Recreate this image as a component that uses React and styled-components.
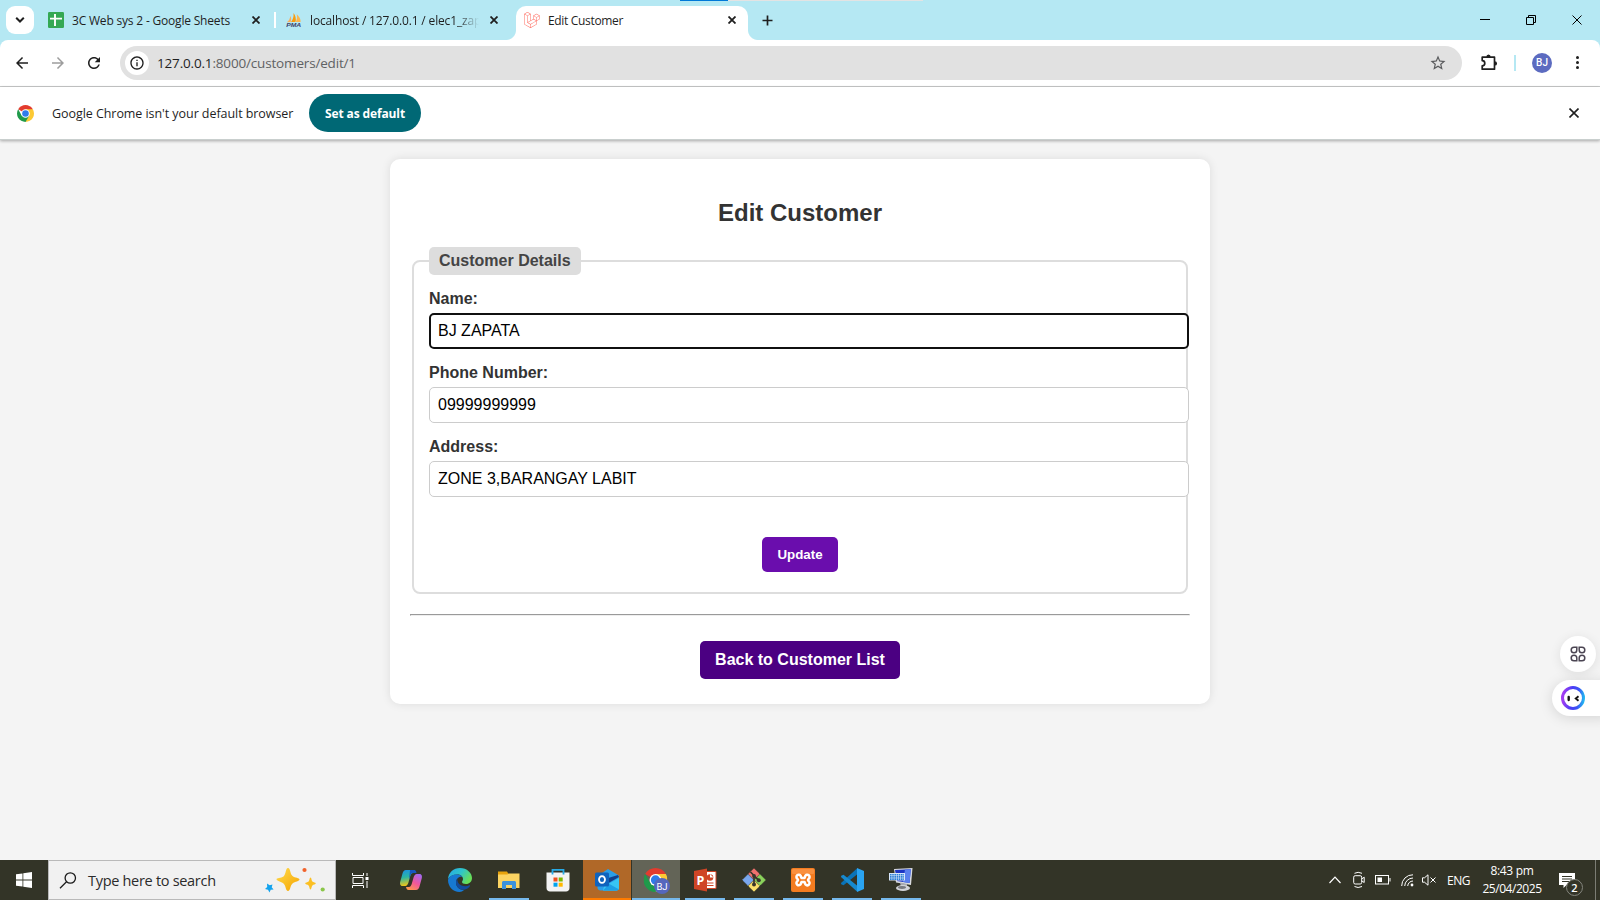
import React from "react";
import styled, { createGlobalStyle } from "styled-components";
import { SiLaravel } from "react-icons/si";

const GlobalStyle = createGlobalStyle`
  *, *::before, *::after { box-sizing: border-box; }
  html, body { margin: 0; padding: 0; }
  body { overflow: hidden; font-family: "Open Sans", "Noto Sans", sans-serif; color: #1f1f1f; }
`;

const Screen = styled.div`
  position: relative;
  display: flex;
  flex-direction: column;
  width: 1600px;
  height: 900px;
  overflow: hidden;
  background: #b5e8f3;
`;

/* Text set with a fine letter-spacing */
const Label = styled.span`
  font-size: ${(p) => p.$size || 12}px;
  letter-spacing: ${(p) => p.$track || 0}px;
  font-weight: ${(p) => p.$weight || 400};
  color: ${(p) => p.$color || "#1f1f1f"};
  white-space: nowrap;
`;

/* ---------- Tab strip ---------- */
const TabStrip = styled.header`
  display: flex;
  height: 40px;
  flex: none;
  padding-left: 6px;
`;

const TabSearch = styled.button`
  display: grid;
  place-items: center;
  width: 28px;
  height: 28px;
  margin: 6px 6px 0 0;
  padding: 0;
  border: 0;
  border-radius: 9px;
  background: #fff;
`;

const Tab = styled.div`
  position: relative;
  display: flex;
  align-items: center;
  width: ${(p) => p.$width}px;
  height: 34px;
  margin-top: 6px;
  margin-right: ${(p) => p.$after || 0}px;
  padding: 0 ${(p) => p.$right || 12}px 6px ${(p) => p.$left || 8}px;
  border-radius: 10px 10px 0 0;
  background: ${(p) => (p.$active ? "#fff" : "transparent")};
  gap: 8px;
`;

const Flare = styled.span`
  position: absolute;
  bottom: 0;
  ${(p) => p.$side}: -10px;
  width: 10px;
  height: 10px;
  background: radial-gradient(circle at ${(p) => (p.$side === "left" ? "0 0" : "100% 0")}, transparent 9.5px, #fff 10.5px);
`;

const TabTitle = styled.div`
  flex: 1;
  min-width: 0;
  overflow: hidden;
  line-height: 18px;
  padding-top: 1px;
  display: flex;
  ${(p) => p.$fade && "mask-image: linear-gradient(90deg, #000 calc(100% - 25px), transparent calc(100% - 3px));"}
`;

const TabDivider = styled.span`
  width: 2px;
  height: 16px;
  margin-top: 12px;
  background: #fff;
`;

const NewTab = styled.button`
  display: grid;
  place-items: center;
  width: 28px;
  height: 28px;
  margin: 6px 0 0 5px;
  padding: 0;
  border: 0;
  background: none;
`;

const WindowControls = styled.div`
  display: flex;
  margin-left: auto;
`;

const WindowButton = styled.button`
  display: grid;
  place-items: center;
  width: 46px;
  height: 40px;
  padding: 0;
  border: 0;
  background: none;
`;

const DropIndicator = styled.div`
  position: absolute;
  top: 0;
  left: 680px;
  width: 243px;
  height: 1px;
  background: linear-gradient(90deg, #0078d7 48px, #e3e3e3 48px);
`;

/* ---------- Toolbar ---------- */
const Toolbar = styled.div`
  display: flex;
  align-items: center;
  flex: none;
  height: 47px;
  padding: 0 12px 1px 13px;
  border-bottom: 1px solid #c9cbcb;
  border-radius: 8px 8px 0 0;
  background: #fff;
`;

const NavButtons = styled.div`
  display: flex;
  gap: 18px;
  margin-right: 17px;
  svg { display: block; }
`;

const AddressBar = styled.div`
  display: flex;
  align-items: center;
  width: 1342px;
  height: 34px;
  padding: 0 15px 0 5px;
  border-radius: 17px;
  background: #e1e1e1;
`;

const SiteInfo = styled.span`
  display: grid;
  place-items: center;
  width: 24px;
  height: 24px;
  margin-right: 8px;
  border-radius: 50%;
  background: #fff;
`;

const Url = styled.div`
  flex: 1;
  display: flex;
  line-height: 20px;
`;

const ToolbarEnd = styled.div`
  display: flex;
  align-items: center;
  flex: 1;
  margin-left: 18px;
  svg { display: block; }
`;

const ToolbarDivider = styled.span`
  width: 2px;
  height: 16px;
  margin: 0 16px 0 16px;
  background: #b5e8f3;
`;

const Avatar = styled.span`
  display: grid;
  place-items: center;
  width: 20px;
  height: 20px;
  border-radius: 50%;
  background: #5c6bc0;
  color: #fff;
  font: 500 10px Roboto, sans-serif;
`;

const Kebab = styled.span`
  display: flex;
  flex-direction: column;
  gap: 2.4px;
  margin-left: 24px;
  i { width: 3px; height: 3px; border-radius: 50%; background: #1f1f1f; }
`;

/* ---------- Default browser bar ---------- */
const InfoBar = styled.div`
  position: relative;
  z-index: 1;
  display: flex;
  align-items: center;
  flex: none;
  height: 53px;
  padding: 0 19px 0 17px;
  border-bottom: 1px solid #c9cfce;
  background: #fff;
  box-shadow: 0 1px 3px rgba(0, 0, 0, 0.32);
`;

const InfoText = styled.span`
  display: flex;
  width: 241px;
  margin: 0 16px 0 18px;
`;

const PillButton = styled.button`
  display: grid;
  place-items: center;
  width: 112px;
  height: 38px;
  padding: 0;
  border: 0;
  border-radius: 19px;
  background: #006875;
  font-family: inherit;
`;

const CloseBar = styled.span`
  display: flex;
  margin-left: auto;
  margin-right: 2px;
`;

/* ---------- Page ---------- */
const Viewport = styled.main`
  flex: 1;
  min-height: 0;
  padding-top: 19px;
  background: #f4f4f4;
  font-family: "Liberation Sans", Arial, sans-serif;
`;

const Card = styled.section`
  width: 820px;
  height: 545px;
  margin: 0 auto;
  padding: 20px;
  border-radius: 10px;
  background: #fff;
  box-shadow: 0 0 10px rgba(0, 0, 0, 0.1);
  text-align: center;
`;

const Title = styled.h2`
  margin: 20px 0 21px;
  color: #333;
  font-size: 24px;
  line-height: 27px;
`;

const Fieldset = styled.fieldset`
  min-width: 0;
  margin: 0 2px;
  padding: 15px 15px 20px;
  border: 2px solid #ddd;
  border-radius: 8px;
  text-align: left;
`;

const Legend = styled.legend`
  padding: 5px 10px;
  border-radius: 5px;
  background: #ddd;
  color: #444;
  font-size: 16px;
  font-weight: bold;
  line-height: 18px;
`;

const Field = styled.label`
  display: block;
  margin-bottom: 15px;
  color: #333;
  font-size: 16px;
  font-weight: bold;
  line-height: 18px;
`;

const TextInput = styled.input`
  display: block;
  width: 760px;
  height: 36px;
  margin-top: 5px;
  padding: ${(p) => (p.$focused ? 7 : 8)}px;
  border: ${(p) => (p.$focused ? "2px solid #101010" : "1px solid #ccc")};
  border-radius: 5px;
  outline: 0;
  background: #fff;
  color: #000;
  font: 16px "Liberation Sans", Arial, sans-serif;
`;

const UpdateButton = styled.button`
  display: block;
  height: 35px;
  margin: 40px auto 0;
  padding: 0 15px;
  border: 0;
  border-radius: 5px;
  background: #6a0dad;
  color: #fff;
  font: bold 13.333px "Liberation Sans", Arial, sans-serif;
`;

const Rule = styled.hr`
  margin: 20px 0 25px;
`;

const BackLink = styled.a`
  display: inline-block;
  padding: 10px 15px;
  border-radius: 5px;
  background: #4b0082;
  color: #fff;
  font-size: 16px;
  font-weight: bold;
  line-height: 18px;
`;

/* ---------- Floating helpers ---------- */
const FloatCircle = styled.div`
  position: absolute;
  top: 636px;
  left: 1560px;
  display: grid;
  place-items: center;
  width: 36px;
  height: 36px;
  border-radius: 50%;
  background: #fff;
  box-shadow: 0 2px 12px rgba(0, 0, 0, 0.09);
`;

const FloatPill = styled.div`
  position: absolute;
  top: 680px;
  left: 1552px;
  display: flex;
  align-items: center;
  width: 66px;
  height: 36px;
  padding-left: 9px;
  border-radius: 18px;
  background: #fff;
  box-shadow: 0 2px 14px rgba(0, 0, 0, 0.13);
`;

/* ---------- Taskbar ---------- */
const Taskbar = styled.footer`
  display: flex;
  flex: none;
  height: 40px;
  background: #333427;
  svg { display: block; }
`;

const StartButton = styled.div`
  display: grid;
  place-items: center;
  width: 48px;
`;

const SearchBox = styled.div`
  display: flex;
  align-items: center;
  width: 288px;
  padding: 0 9px 0 10px;
  border: 1px solid #b9b9b9;
  background: #f1f1f1;
`;

const SearchText = styled.span`
  flex: 1;
  display: flex;
  margin-left: 11px;
`;

const TaskView = styled.div`
  display: grid;
  place-items: center;
  width: 48px;
  margin-right: 3px;
`;

const AppButton = styled.div`
  display: flex;
  flex-direction: column;
  align-items: center;
  justify-content: space-between;
  width: 48px;
  height: 40px;
  margin-right: 1px;
  padding-top: 8px;
  background: ${(p) => p.$fill || "transparent"};
`;

const RunningLine = styled.span`
  width: ${(p) => (p.$wide ? 48 : 40)}px;
  height: 2px;
  background: ${(p) => p.$color || "#76b9ed"};
`;

const Tray = styled.div`
  display: flex;
  align-items: center;
  margin-left: auto;
  color: #fff;
`;

const TrayIcon = styled.span`
  display: grid;
  place-items: center;
  width: ${(p) => p.$width || 24}px;
`;

const Language = styled.span`
  display: flex;
  width: 30px;
  margin-left: 8px;
`;

const Clock = styled.div`
  display: flex;
  flex-direction: column;
  align-items: center;
  width: 70px;
  line-height: 18px;
  padding-bottom: 1px;
`;

const Notifications = styled.div`
  position: relative;
  display: grid;
  place-items: center;
  width: 48px;
  height: 40px;
  padding-right: 8px;
`;

const NotificationCount = styled.span`
  position: absolute;
  top: 19px;
  left: 19px;
  display: grid;
  place-items: center;
  width: 17px;
  height: 17px;
  border: 1px solid #85867e;
  border-radius: 50%;
  background: #333427;
  color: #fff;
  font-size: 11px;
  font-weight: 600;
  line-height: 1;
`;

const ShowDesktop = styled.span`
  width: 5px;
  height: 40px;
  border-left: 1px solid #7c7d74;
`;

/* ---------- Drawings ---------- */
const Cross = ({ size = 8, width = 1.8, color = "#1f1f1f" }) => (
  <svg width={size} height={size} viewBox={`0 0 ${size} ${size}`} stroke={color} strokeWidth={width}>
    <path d={`M.5 .5 L${size - 0.5} ${size - 0.5} M${size - 0.5} .5 L.5 ${size - 0.5}`} />
  </svg>
);

const Glyph = ({ d, size = 18, color = "#1f1f1f" }) => (
  <svg width={size} height={size} viewBox="0 0 24 24" fill={color}>
    <path d={d} />
  </svg>
);

const BACK = "M20 11H7.83l5.59-5.59L12 4l-8 8 8 8 1.41-1.41L7.83 13H20v-2z";
const FORWARD = "M12 4l-1.41 1.41L16.17 11H4v2h12.17l-5.58 5.59L12 20l8-8z";
const RELOAD =
  "M17.65 6.35C16.2 4.9 14.21 4 12 4c-4.42 0-7.99 3.58-7.99 8s3.57 8 7.99 8c3.73 0 6.84-2.55 7.73-6h-2.08c-.82 2.33-3.04 4-5.65 4-3.31 0-6-2.69-6-6s2.69-6 6-6c1.66 0 3.14.69 4.22 1.78L13 11h7V4l-2.35 2.35z";
const STAR =
  "M22 9.24l-7.19-.62L12 2 9.19 8.63 2 9.24l5.46 4.73L5.82 21 12 17.27 18.18 21l-1.63-7.03L22 9.24zM12 15.4l-3.76 2.27 1-4.28-3.32-2.88 4.38-.38L12 6.1l1.71 4.04 4.38.38-3.32 2.88 1 4.28L12 15.4z";
const INFO =
  "M11 7h2v2h-2zm0 4h2v6h-2zm1-9C6.48 2 2 6.48 2 12s4.48 10 10 10 10-4.48 10-10S17.52 2 12 2zm0 18c-4.41 0-8-3.59-8-8s3.59-8 8-8 8 3.59 8 8-3.59 8-8 8z";

const SheetsIcon = () => (
  <svg width="16" height="16" viewBox="0 0 16 16">
    <rect width="16" height="16" rx="1.2" fill="#34a853" />
    <path d="M2 6.6h12M7 2v12" stroke="#fff" strokeWidth="1.9" />
  </svg>
);

const PmaIcon = () => (
  <svg width="16" height="16" viewBox="0 0 17 16">
    <path d="M1 10.5Q4 8 5 3.5 6 7 5 10z" fill="#fbb05a" />
    <path d="M5.4 10Q8.5 6 8 .5 11.500 5 10 10z" fill="#f89c0e" />
    <path d="M10.600 10Q12.500 6 11.500 2 15.800 6 15.500 10z" fill="#fbb64f" />
    <text x=".2" y="15" fill="#3b3f6b" fontFamily="Liberation Sans, sans-serif" fontSize="6.200" fontWeight="700" fontStyle="italic" textLength="16" lengthAdjust="spacingAndGlyphs">PMA</text>
  </svg>
);

const PuzzleIcon = () => (
  <svg width="18" height="18" viewBox="0 0 18 18" fill="none" stroke="#1f1f1f" strokeWidth="1.700" strokeLinejoin="round">
    <path d="M2.200 3.200H14.500V15.200H2.200V11.800A2.600 2.600 0 0 0 2.200 6.600Z" />
    <path d="M6.300 3.200a2.200 2.600 0 0 1 4.400 0zM14.500 7.200a2.600 2.200 0 0 1 0 4.400z" fill="#1f1f1f" stroke="none" />
  </svg>
);

const ChromeIcon = ({ size }) => (
  <svg width={size} height={size} viewBox="0 0 48 48">
    <path d="M24 24 L3.220 12 A24 24 0 0 1 44.780 12 Z" fill="#e33b2e" />
    <path d="M24 24 V12 H44.780 A24 24 0 0 1 24 48 Z" fill="#fcc934" />
    <path d="M3.220 12 L13.600 30 L24 24 L34.400 30 L24 48 A24 24 0 0 1 3.220 12 Z" fill="#1f9a4a" />
    <circle cx="24" cy="24" r="12" fill="#fff" />
    <circle cx="24" cy="24" r="9.300" fill="#2f7bea" />
  </svg>
);

const SparkleArt = () => (
  <svg width="62" height="26" viewBox="0 0 62 26">
    <defs>
      <linearGradient id="gold" x1="0" y1="0" x2="1" y2="1">
        <stop offset="0" stopColor="#ffdc4d" />
        <stop offset="1" stopColor="#f5a300" />
      </linearGradient>
    </defs>
    <path d="M24 1C26.500 1 26 7 28.500 9S35.500 10.800 35.500 12.500 31 14.500 28.500 16.500 26.500 24 24 24 22 18.500 19.500 16.500 12.500 14 12.500 12.300 17 11.500 19.500 9.500 21.500 1 24 1Z" fill="url(#gold)" />
    <path d="M46.500 10.500c1 0 1 3.200 1.900 4.100s3.400 1 3.400 1.900-2.500 1-3.400 1.900-.9 4-1.900 4-1-3.100-1.900-4-3.400-1-3.400-1.900 2.500-1 3.400-1.900.9-4.100 1.900-4.100z" fill="#fbbf22" />
    <path d="M3 16.500l2.700 1.800 2.800-.9-.8 2.800 1.900 2.200-2.900.3L5.500 25.500l-1.500-2.800-3-.7 2.200-2z" fill="#13a3ee" />
    <circle cx="40.500" cy="3" r="2.100" fill="#f1622b" />
    <circle cx="58.700" cy="22.500" r="2.100" fill="#8ac649" />
  </svg>
);

const TaskViewIcon = () => (
  <svg width="17" height="17" viewBox="0 0 17 17" fill="none" stroke="#fff" strokeWidth="1">
    <path d="M.5 1v2.500h11V1M.5 16v-2.500h11V16M1 5.500h10v6H1zM15 1v3M15 9v7" />
    <rect x="13.500" y="5" width="3" height="3" fill="#fff" stroke="none" />
  </svg>
);

const CopilotIcon = () => (
  <svg width="24" height="24" viewBox="0 0 24 24">
    <defs>
      <linearGradient id="cpA" x1="0" y1="0" x2=".2" y2="1">
        <stop offset="0" stopColor="#1a8fe8" />
        <stop offset=".5" stopColor="#2cb7a1" />
        <stop offset="1" stopColor="#f0c419" />
      </linearGradient>
      <linearGradient id="cpB" x1=".8" y1="0" x2=".2" y2="1">
        <stop offset="0" stopColor="#a56af0" />
        <stop offset=".5" stopColor="#f0569c" />
        <stop offset="1" stopColor="#ff9a4a" />
      </linearGradient>
    </defs>
    <path d="M7 2h7.500c1.500 0 2 1 2.500 3h-3c-1.500 0-2.200 1.500-2.700 3l-2 7c-.5 1.500-1.500 3-3 3H3.500C1 18 .7 15.500 1.300 13.500l2.200-8C4.200 3.500 5 2 7 2z" fill="url(#cpA)" />
    <path d="M11 2h4c1.500 0 2 1 2.500 3H14c-1.500 0-2.300 1-2.800 3L10 12z" fill="#1557c0" />
    <path d="M17 22H9.500C8 22 7.500 21 7 19h3c1.500 0 2.200-1.500 2.700-3l2-7c.5-1.500 1.500-3 3-3h2.800c2.500 0 2.800 2.500 2.200 4.500l-2.200 8C19.800 20.500 19 22 17 22z" fill="url(#cpB)" />
  </svg>
);

const EdgeIcon = () => (
  <svg width="24" height="24" viewBox="0 0 24 24">
    <defs>
      <linearGradient id="edA" x1="0" y1="0" x2="1" y2=".5">
        <stop offset="0" stopColor="#25a8e8" />
        <stop offset=".55" stopColor="#2fc5c9" />
        <stop offset="1" stopColor="#68de58" />
      </linearGradient>
    </defs>
    <path d="M0 11C.5 4.500 5.500 0 12 0c7 0 12 5 12 10 0 3.500-2.500 6-6 6-2.500 0-4-1-4-2 0-.8 1-1.200 1-3 0-2.500-2.500-4.500-5.500-4.500C5 6.500 1.500 8.500 0 11z" fill="url(#edA)" />
    <path d="M0 12C.8 8.500 4.500 6.500 9 6.500c2.600 0 4.500 1 5.400 2.500C11 8 8 11 8 14.500c0 4.500 3.500 7.500 8 7.500-1.200 1.200-2.800 2-4.500 2C5 24 0 18.500 0 12z" fill="#1779d2" />
    <path d="M9.300 11C8 12 8 13.500 8 14.500c0 5 4.500 8 9 7 2-.5 4-2 5-3.600.3-.5-.1-.9-.6-.6-4.500 2-12.100.7-12.100-6.300z" fill="#124b9d" />
  </svg>
);

const ExplorerIcon = () => (
  <svg width="24" height="24" viewBox="0 0 24 24">
    <path d="M1 3.500h9l1.500 2.500H22v2H1z" fill="#e8a30c" />
    <path d="M1 6.500h9.500l1-1H22.500V20H1z" fill="#fcd462" />
    <path d="M5 21v-6.500c0-.8.700-1.500 1.500-1.500h11c.8 0 1.500.7 1.500 1.500V21h-4v-4H9v4z" fill="#3d92dc" />
  </svg>
);

const StoreIcon = () => (
  <svg width="24" height="24" viewBox="0 0 24 24">
    <path d="M.5 4.500h23V20c0 2-1.500 3.500-3.500 3.500H4C2 23.500.5 22 .5 20z" fill="#f3f3f3" />
    <path d="M6.500 6.500V1.800h11v4.700" fill="none" stroke="#27aae6" strokeWidth="1.800" />
    <rect x="7.500" y="9.500" width="4" height="4" fill="#f0501e" />
    <rect x="12.700" y="9.500" width="4" height="4" fill="#7db900" />
    <rect x="7.500" y="14.700" width="4" height="4" fill="#00a3ee" />
    <rect x="12.700" y="14.700" width="4" height="4" fill="#ffb800" />
  </svg>
);

const OutlookIcon = () => (
  <svg width="24" height="24" viewBox="0 0 24 24">
    <path d="M2.500 8L13 1l11 6.500V20c0 1.500-1 2.500-2.500 2.500h-16C4 22.500 2.500 21.500 2.500 20z" fill="#2a9ee8" />
    <path d="M10 11l13-4 1 2-14 8z" fill="#123f8c" />
    <path d="M24 10L9 18.500 8 22.500h13.500c1.500 0 2.500-1 2.500-2.500z" fill="#38c5f4" />
    <path d="M8 22.500h13.500c1 0 1.800-.5 2.200-1.200L14 15.800z" fill="#1d9fe6" />
    <rect x="0" y="4.500" width="14" height="14" rx="1.500" fill="#0f63bd" />
    <ellipse cx="7" cy="11.500" rx="3" ry="3.400" fill="none" stroke="#fff" strokeWidth="1.800" />
  </svg>
);

const ChromeProfileIcon = () => (
  <svg width="28" height="28" viewBox="0 0 28 28">
    <svg x="1.500" y="0" width="24" height="24"><ChromeIcon size={24} /></svg>
    <circle cx="20" cy="18" r="8" fill="#5567bd" />
    <text x="20" y="21.500" fill="#fff" fontFamily="Roboto, sans-serif" fontSize="9.500" textAnchor="middle">BJ</text>
  </svg>
);

const PowerPointIcon = () => (
  <svg width="24" height="24" viewBox="0 0 24 24">
    <path d="M12 3.500h11v17H12z" fill="#fff" stroke="#cf4526" strokeWidth="1" />
    <circle cx="17" cy="9.500" r="3.300" fill="#cf4526" />
    <path d="M17 9.500V6l3.500 3.500z" fill="#fff" />
    <path d="M14 15h6.500M14 17.500h6.500" stroke="#cf4526" strokeWidth="1.200" />
    <path d="M1 3L14 .5v23L1 21z" fill="#cf4526" />
    <text x="3.600" y="16.500" fill="#fff" fontFamily="Open Sans, sans-serif" fontWeight="700" fontSize="12.500">P</text>
  </svg>
);

const GitIcon = () => (
  <svg width="24" height="24" viewBox="0 0 24 24">
    <g strokeLinejoin="round" strokeWidth="1">
      <path d="M12 .8L17.300 6 12 11.300 6.700 6z" fill="#f0716e" stroke="#f0716e" />
      <path d="M6 6.700L11.300 12 6 17.300.7 12z" fill="#7aa7ee" stroke="#7aa7ee" />
      <path d="M18 6.700L23.300 12 18 17.300 12.700 12z" fill="#8bd25c" stroke="#8bd25c" />
      <path d="M12 12.700L17.300 18 12 23.200 6.700 18z" fill="#fbe06b" stroke="#fbe06b" />
    </g>
    <path d="M8.500 4l3.500 3.500V17M12 8l4.500 4" fill="none" stroke="#38352c" strokeWidth="1.700" />
    <circle cx="12" cy="8" r="1.900" fill="#38352c" />
    <circle cx="12" cy="16.500" r="2" fill="#38352c" />
    <circle cx="16.800" cy="12.200" r="2" fill="#38352c" />
  </svg>
);

const XamppIcon = () => (
  <svg width="24" height="24" viewBox="0 0 24 24">
    <rect width="24" height="24" rx="2" fill="#f47c20" />
    <rect x="1" y="1" width="22" height="5" rx="1" fill="#ffa35c" opacity=".5" />
    <path d="M9.500 7.500A2.300 2.300 0 1 0 6 10.500q2 1.500 0 3a2.300 2.300 0 1 0 3.500 3l1-2.500h3l1 2.500a2.300 2.300 0 1 0 3.500-3q-2-1.500 0-3a2.300 2.300 0 1 0-3.500-3L13.500 10h-3z" fill="none" stroke="#fff" strokeWidth="2.500" strokeLinejoin="round" />
  </svg>
);

const CodeIcon = () => (
  <svg width="24" height="24" viewBox="0 0 24 24">
    <path d="M17 6.500L3.500 17.300 1.200 16.200 1 15 17.200.3V6.500z" fill="#0a73b8" />
    <path d="M17 17.500L3.500 6.700 1.200 7.800 1 9 17.200 23.700V17.500z" fill="#1689cf" />
    <path d="M17 0l7 3v18l-7 3z" fill="#2aa4f2" />
  </svg>
);

const RemoteDesktopIcon = () => (
  <svg width="24" height="24" viewBox="0 0 24 24">
    <path d="M5 1L23.500 0 22 17 7 14.500z" fill="#d9dbe0" />
    <path d="M6 2L21.800 1.300 20.600 15 8 13z" fill="#1c35c4" />
    <path d="M16 1.600l5.800-.3L20.600 15 14 14z" fill="#5b80ee" />
    <path d="M11 14.500l7 1.500v3h-6z" fill="#a9abb2" />
    <ellipse cx="14" cy="20" rx="7" ry="3" fill="#d3d4d9" />
    <ellipse cx="13" cy="19.500" rx="4" ry="1.400" fill="#77797f" />
    <rect x="0" y="5" width="16" height="7.500" fill="#d8e6fa" />
    <path d="M1 6.700h14M1 8.900h14M1 11.100h14" stroke="#2c7fd6" strokeWidth="1.600" strokeDasharray="1.600 .6" />
  </svg>
);

const FloatingTools = () => (
  <>
    <FloatCircle>
      <svg width="16" height="16" viewBox="0 0 16 16" fill="none" stroke="#4b4553" strokeWidth="1.500">
        <path d="M4 1.200h2.800V4A2.800 2.800 0 1 1 4 1.200zM12 1.200H9.200V4A2.800 2.800 0 1 0 12 1.200zM4 14.800h2.800V12A2.800 2.800 0 1 0 4 14.800zM12 14.800H9.200V12A2.800 2.800 0 1 1 12 14.800z" />
      </svg>
    </FloatCircle>
    <FloatPill>
      <svg width="24" height="24" viewBox="0 0 24 24">
        <defs>
          <linearGradient id="ring" x1="0" y1=".7" x2="1" y2=".8">
            <stop offset="0" stopColor="#a13df2" />
            <stop offset=".4" stopColor="#4a3df5" />
            <stop offset=".7" stopColor="#3d50f5" />
            <stop offset="1" stopColor="#23b7f0" />
          </linearGradient>
        </defs>
        <circle cx="12" cy="12" r="10.500" fill="#fff" stroke="url(#ring)" strokeWidth="3" />
        <rect x="6.500" y="9.800" width="2.400" height="5.400" rx="1.100" fill="#111" />
        <path d="M17.500 10.300L14.800 12.500l2.700 2.200" fill="none" stroke="#111" strokeWidth="1.900" />
      </svg>
    </FloatPill>
  </>
);

const apps = [
  { name: "copilot", Icon: CopilotIcon },
  { name: "edge", Icon: EdgeIcon },
  { name: "explorer", Icon: ExplorerIcon, running: true },
  { name: "store", Icon: StoreIcon },
  { name: "outlook", Icon: OutlookIcon, running: true, wide: true, fill: "#b06828", line: "#ff7b00" },
  { name: "chrome", Icon: ChromeProfileIcon, running: true, wide: true, fill: "#636457" },
  { name: "powerpoint", Icon: PowerPointIcon, running: true },
  { name: "git", Icon: GitIcon, running: true },
  { name: "xampp", Icon: XamppIcon, running: true },
  { name: "code", Icon: CodeIcon, running: true },
  { name: "remote", Icon: RemoteDesktopIcon, running: true },
];

const fields = [
  { label: "Name:", value: "BJ ZAPATA", focused: true },
  { label: "Phone Number:", value: "09999999999" },
  { label: "Address:", value: "ZONE 3,BARANGAY LABIT" },
];

export default function App() {
  return (
    <Screen>
      <GlobalStyle />
      <TabStrip>
        <TabSearch>
          <svg width="10" height="6" viewBox="0 0 10 6" fill="none" stroke="#1f1f1f" strokeWidth="2"><path d="M1.200 .8L5 4.500 8.800 .8" /></svg>
        </TabSearch>
        <Tab $width={234} $left={8} $right={14}>
          <SheetsIcon />
          <TabTitle><Label $size={12} $track={-0.19}>3C Web sys 2 - Google Sheets</Label></TabTitle>
          <Cross />
        </Tab>
        <TabDivider />
        <Tab $width={234} $left={10} $after={6}>
          <PmaIcon />
          <TabTitle $fade><Label $size={12} $track={-0.15}>localhost / 127.0.0.1 / elec1_zap</Label></TabTitle>
          <Cross />
        </Tab>
        <Tab $active $width={232}>
          <Flare $side="left" />
          <SiLaravel size={16} color="#ff6b5f" />
          <TabTitle><Label $size={12} $track={-0.33}>Edit Customer</Label></TabTitle>
          <Cross />
          <Flare $side="right" />
        </Tab>
        <NewTab>
          <svg width="11" height="11" viewBox="0 0 11 11" stroke="#1f1f1f" strokeWidth="1.700"><path d="M5.500 .5v10M.5 5.500h10" /></svg>
        </NewTab>
        <WindowControls>
          <WindowButton><svg width="10" height="10" viewBox="0 0 10 10"><path d="M0 4.500h10" stroke="#000" /></svg></WindowButton>
          <WindowButton><svg width="10" height="10" viewBox="0 0 10 10" fill="none" stroke="#000"><path d="M.5 2.500h7v7h-7zM2.500 2.500v-2h7v7h-2" /></svg></WindowButton>
          <WindowButton><Cross size={10} width={1} color="#000" /></WindowButton>
        </WindowControls>
      </TabStrip>
      <DropIndicator />

      <Toolbar>
        <NavButtons>
          <Glyph d={BACK} />
          <Glyph d={FORWARD} color="#9d9d9d" />
          <Glyph d={RELOAD} />
        </NavButtons>
        <AddressBar>
          <SiteInfo><Glyph d={INFO} size={16} /></SiteInfo>
          <Url>
            <Label $size={13.5} $track={-0.17}>127.0.0.1</Label>
            <Label $size={13.5} $track={-0.17} $color="#5f6264">:8000/customers/edit/1</Label>
          </Url>
          <Glyph d={STAR} size={18} color="#5a5b5d" />
        </AddressBar>
        <ToolbarEnd>
          <PuzzleIcon />
          <ToolbarDivider />
          <Avatar>BJ</Avatar>
          <Kebab><i /><i /><i /></Kebab>
        </ToolbarEnd>
      </Toolbar>

      <InfoBar>
        <ChromeIcon size={17} />
        <InfoText><Label $size={12.5} $track={-0.06}>Google Chrome isn't your default browser</Label></InfoText>
        <PillButton><Label $size={12} $weight={700} $color="#fff" $track={-0.12}>Set as default</Label></PillButton>
        <CloseBar><Cross size={10} width={1.600} /></CloseBar>
      </InfoBar>

      <Viewport>
        <Card>
          <Title>Edit Customer</Title>
          <Fieldset>
            <Legend>Customer Details</Legend>
            {fields.map((f) => (
              <Field key={f.label}>
                {f.label}
                <TextInput $focused={f.focused} defaultValue={f.value} />
              </Field>
            ))}
            <UpdateButton>Update</UpdateButton>
          </Fieldset>
          <Rule />
          <BackLink>Back to Customer List</BackLink>
        </Card>
      </Viewport>
      <FloatingTools />

      <Taskbar>
        <StartButton>
          <svg width="16" height="16" viewBox="0 0 16 16" fill="#fff"><path d="M0 2.300L6.500 1.400V7.600H0zM7.300 1.300L16 0V7.600H7.300zM0 8.400h6.500v6.200L0 13.700zM7.300 8.400H16V16L7.300 14.700z" /></svg>
        </StartButton>
        <SearchBox>
          <svg width="18" height="17" viewBox="0 0 18 17" fill="none" stroke="#1b1b1b" strokeWidth="1.300"><circle cx="11.300" cy="6" r="5.200" /><path d="M7.500 9.700L1 16.200" /></svg>
          <SearchText><Label $size={14.5} $track={-0.3} $color="#2b2b2b">Type here to search</Label></SearchText>
          <SparkleArt />
        </SearchBox>
        <TaskView><TaskViewIcon /></TaskView>
        {apps.map(({ name, Icon, running, wide, fill, line }) => (
          <AppButton key={name} $fill={fill}>
            <Icon />
            {running && <RunningLine $wide={wide} $color={line} />}
          </AppButton>
        ))}
        <Tray>
          <TrayIcon><svg width="12" height="8" viewBox="0 0 12 8" fill="none" stroke="#fff" strokeWidth="1.200"><path d="M.5 7L6 1.200 11.500 7" /></svg></TrayIcon>
          <TrayIcon>
            <svg width="12" height="18" viewBox="0 0 12 18" fill="none" stroke="#fff"><rect x=".7" y="4.700" width="8" height="8.300" rx="1.500" /><path d="M8.700 8l2.500-1.800v5.300L8.700 9.800M1.500 2.300Q5 .3 9 2.300M1.500 15.500Q5 17.500 9 15.500" /></svg>
          </TrayIcon>
          <TrayIcon>
            <svg width="16" height="10" viewBox="0 0 16 10" fill="none" stroke="#fff"><rect x=".5" y=".5" width="13" height="8.500" /><rect x="2.500" y="2.500" width="4.500" height="4.500" fill="#fff" stroke="none" /><path d="M15 3v3.500" /></svg>
          </TrayIcon>
          <TrayIcon>
            <svg width="13" height="13" viewBox="0 0 13 13" fill="none" stroke="#fff"><path d="M.7 12A11 11 0 0 1 12 .8M3.700 12A8.300 8.300 0 0 1 12 4M6.700 12A5.300 5.300 0 0 1 12 7" /><circle cx="11" cy="11" r="1.400" fill="#fff" stroke="none" /></svg>
          </TrayIcon>
          <TrayIcon $width={20}>
            <svg width="15" height="12" viewBox="0 0 15 12" fill="none" stroke="#fff"><path d="M.5 3.800h2L6 .8v10.400L2.500 8.200h-2zM8.500 3.500l5 5M13.500 3.500l-5 5" /></svg>
          </TrayIcon>
          <Language><Label $size={12} $color="#fff" $track={-0.5}>ENG</Label></Language>
          <Clock>
            <Label $size={12} $color="#fff" $track={-0.3}>8:43 pm</Label>
            <Label $size={12} $color="#fff" $track={-0.45}>25/04/2025</Label>
          </Clock>
          <Notifications>
            <svg width="16" height="15" viewBox="0 0 16 15"><path d="M0 0h16v12H7.500L4.500 15v-3H0z" fill="#fff" /><path d="M3 3.500h10M3 6h10M3 8.500h7" stroke="#333427" /></svg>
            <NotificationCount>2</NotificationCount>
          </Notifications>
          <ShowDesktop />
        </Tray>
      </Taskbar>
    </Screen>
  );
}
